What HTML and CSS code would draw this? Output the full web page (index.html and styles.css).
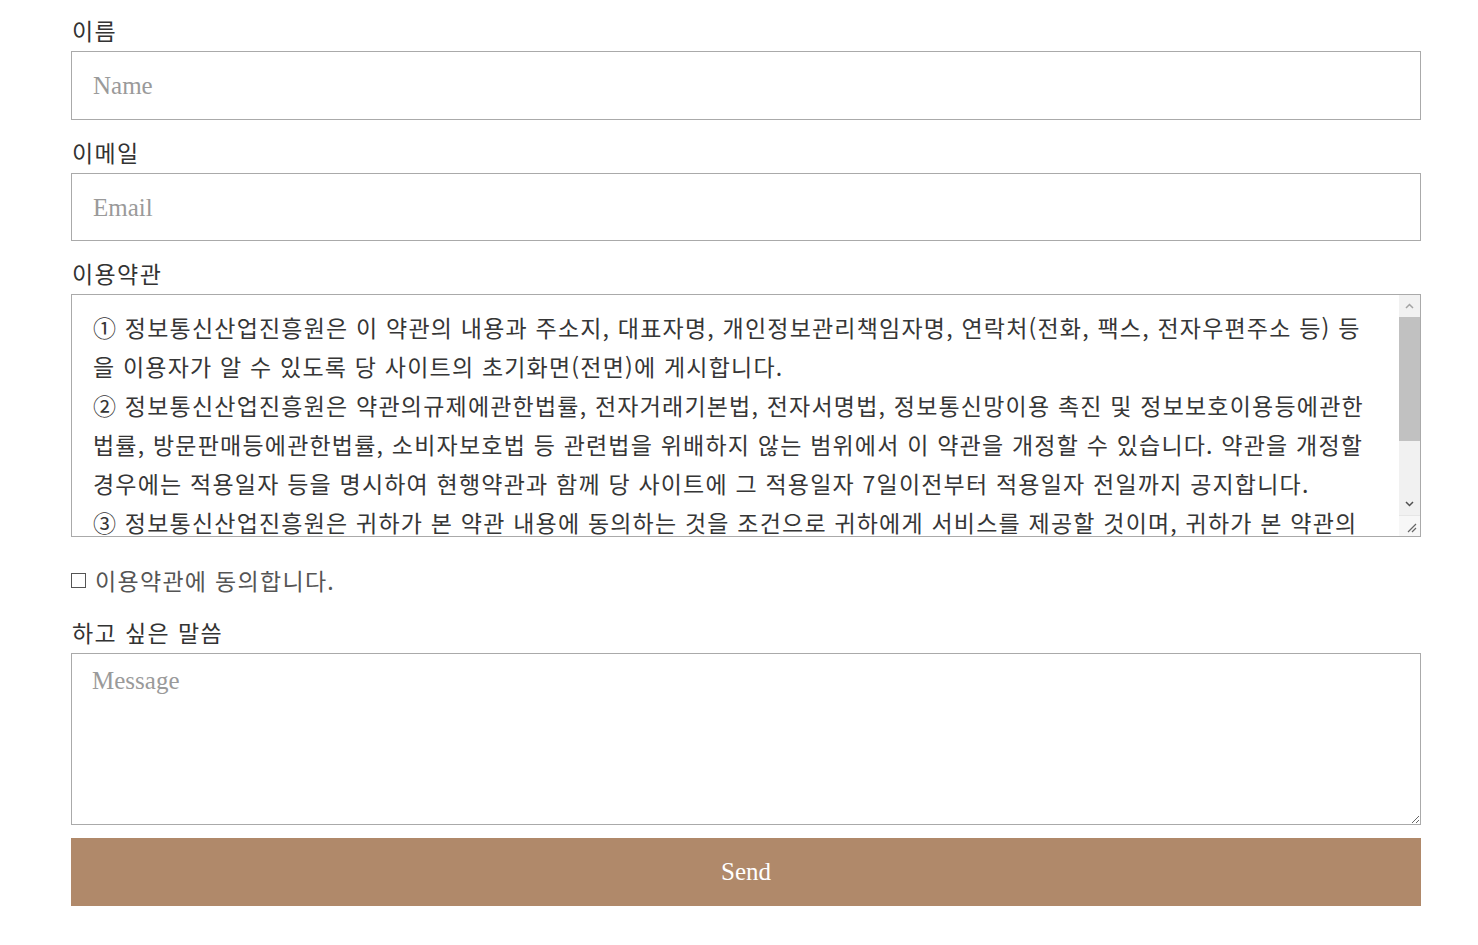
FILE: index.html
```html
<!DOCTYPE html>
<html lang="ko">
<head>
  <meta charset="UTF-8">
  <meta name="viewport" content="width=device-width, initial-scale=1.0">
  <title>Contact</title>
  <link rel="stylesheet" href="styles.css">
</head>
<body>
  <form class="contact-form" novalidate>
    <div class="form-group">
      <label for="name">이름</label>
      <input type="text" id="name" name="name" placeholder="Name">
    </div>

    <div class="form-group">
      <label for="email">이메일</label>
      <input type="email" id="email" name="email" placeholder="Email">
    </div>

    <div class="form-group">
      <label>이용약관</label>
      <div class="terms-box">
        <div class="terms-text">
          <p>① 정보통신산업진흥원은 이 약관의 내용과 주소지, 대표자명, 개인정보관리책임자명, 연락처(전화, 팩스, 전자우편주소 등) 등을 이용자가 알 수 있도록 당 사이트의 초기화면(전면)에 게시합니다.</p>
          <p>② 정보통신산업진흥원은 약관의규제에관한법률, 전자거래기본법, 전자서명법, 정보통신망이용 촉진 및 정보보호이용등에관한법률, 방문판매등에관한법률, 소비자보호법 등 관련법을 위배하지 않는 범위에서 이 약관을 개정할 수 있습니다. 약관을 개정할 경우에는 적용일자 등을 명시하여 현행약관과 함께 당 사이트에 그 적용일자 7일이전부터 적용일자 전일까지 공지합니다.</p>
          <p>③ 정보통신산업진흥원은 귀하가 본 약관 내용에 동의하는 것을 조건으로 귀하에게 서비스를 제공할 것이며, 귀하가 본 약관의</p>
        </div>
        <div class="scrollbar">
          <span class="sb-btn">
            <svg width="9" height="6" viewBox="0 0 9 6"><path d="M1 5 L4.5 1.5 L8 5" fill="none" stroke="#a3a3a3" stroke-width="1.5"/></svg>
          </span>
          <span class="sb-track"><span class="sb-thumb"></span></span>
          <span class="sb-btn">
            <svg width="9" height="6" viewBox="0 0 9 6"><path d="M1 1 L4.5 4.5 L8 1" fill="none" stroke="#505050" stroke-width="1.5"/></svg>
          </span>
          <span class="sb-corner">
            <svg width="10" height="10" viewBox="0 0 10 10"><path d="M1 9 L9 1 M5 9 L9 5" fill="none" stroke="#666" stroke-width="1.2"/></svg>
          </span>
        </div>
      </div>
    </div>

    <div class="agree-row">
      <input type="checkbox" id="agree" name="agree">
      <label for="agree">이용약관에 동의합니다.</label>
    </div>

    <div class="form-group">
      <label for="message">하고 싶은 말씀</label>
      <textarea id="message" class="message" name="message" placeholder="Message"></textarea>
    </div>

    <button type="submit">Send</button>
  </form>
</body>
</html>
```

FILE: styles.css
```css
body {
  margin: 0;
  background: #fff;
  font-family: "Liberation Serif", "Noto Sans CJK KR", serif;
  color: #333;
}
.contact-form {
  width: 1350px;
  margin-left: 71px;
  padding-top: 14px;
}
.form-group {
  margin-bottom: 16px;
}
.form-group label {
  display: block;
  font-family: "Noto Sans CJK KR", sans-serif;
  font-size: 23px;
  letter-spacing: 1.4px;
  line-height: 32px;
  margin-bottom: 5px;
  margin-left: 1px;
  color: #333;
}
input[type="text"],
input[type="email"],
textarea {
  display: block;
  width: 100%;
  box-sizing: border-box;
  border: 1px solid #aaa;
  border-radius: 0;
  font-family: "Liberation Serif", "Noto Sans CJK KR", serif;
  font-size: 25px;
  color: #444;
  outline: none;
}
input[type="text"],
input[type="email"] {
  height: 68.5px;
  padding: 2px 21px 0;
}
::placeholder {
  color: #9a9a9a;
}
.terms-box {
  display: flex;
  height: 243px;
  box-sizing: border-box;
  border: 1px solid #aaa;
}
.terms-text {
  flex: 1;
  overflow: hidden;
  padding: 13px 21px 0 21px;
  font-family: "Noto Sans CJK KR", sans-serif;
  font-size: 23px;
  letter-spacing: 1.2px;
  line-height: 39px;
  color: #363636;
}
.terms-text p {
  margin: 0;
}
.scrollbar {
  width: 21px;
  display: flex;
  flex-direction: column;
  background: #f1f1f1;
}
.sb-btn {
  height: 22px;
  display: flex;
  align-items: center;
  justify-content: center;
}
.sb-track {
  flex: 1;
  display: flex;
  flex-direction: column;
}
.sb-thumb {
  height: 124px;
  background: #c1c1c1;
}
.sb-corner {
  height: 21px;
  display: flex;
  align-items: flex-end;
  justify-content: flex-end;
  padding: 0 3px 3px 0;
  box-sizing: border-box;
  background: #f7f7f7;
  border-top: 1px solid #e6e6e6;
}
.agree-row {
  display: flex;
  align-items: center;
  gap: 9px;
  margin-top: 27px;
  margin-bottom: 20px;
  height: 32px;
}
.agree-row input {
  appearance: none;
  width: 15px;
  height: 15px;
  margin: 0;
  border: 1px solid #555;
  background: #fff;
}
.agree-row label {
  font-family: "Noto Sans CJK KR", sans-serif;
  font-size: 23px;
  letter-spacing: 1.3px;
  line-height: 32px;
  color: #555;
}
.message {
  height: 172px;
  padding: 12px 20px;
  line-height: 30px;
  resize: vertical;
}
button {
  display: block;
  width: 100%;
  height: 68px;
  margin-top: -3px;
  border: none;
  background-color: #b0896a;
  color: #fff;
  font-family: "Liberation Serif", serif;
  font-size: 25px;
  cursor: pointer;
}
button:hover {
  background-color: #a67e5f;
}
```
